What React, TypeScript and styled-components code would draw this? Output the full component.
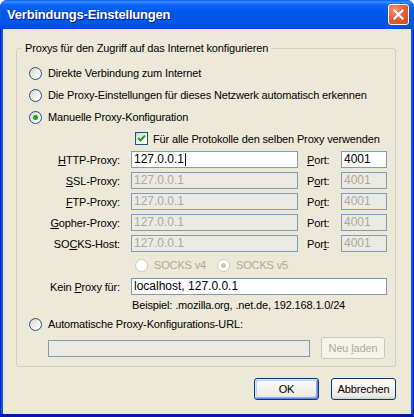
import React from "react";
import styled, { createGlobalStyle, css } from "styled-components";

const GlobalStyle = createGlobalStyle`
  html, body {
    margin: 0;
    padding: 0;
    background: #ffffff;
  }
  body {
    font-family: "Liberation Sans", Arial, sans-serif;
    font-size: 11px;
    letter-spacing: -0.15px;
    color: #000;
  }
`;

const Window = styled.div`
  width: 414px;
  height: 417px;
  display: flex;
  flex-direction: column;
  border-radius: 7px 7px 0 0;
  overflow: hidden;
  background: #0055e6;
`;

const TitleBar = styled.div`
  height: 29px;
  flex: none;
  display: flex;
  align-items: center;
  justify-content: space-between;
  padding: 0 5px 0 7px;
  box-sizing: border-box;
  background: linear-gradient(
    180deg,
    #0a5ff2 0%,
    #3d8fff 7%,
    #1068f5 14%,
    #0058ea 40%,
    #0055e5 85%,
    #0047d6 100%
  );
`;

const Title = styled.span`
  font-family: "Liberation Sans", Arial, sans-serif;
  font-weight: bold;
  font-size: 13px;
  letter-spacing: -0.2px;
  color: #fff;
  text-shadow: 1px 1px 0 #0a1a8a;
`;

const CloseButton = styled.div`
  width: 21px;
  height: 21px;
  box-sizing: border-box;
  border: 1px solid #fff;
  border-radius: 3px;
  display: flex;
  align-items: center;
  justify-content: center;
  background: radial-gradient(
    circle at 30% 25%,
    #f29272 0%,
    #e4623a 45%,
    #cf4a1f 100%
  );
`;

const Frame = styled.div`
  flex: 1;
  display: flex;
  border-left: 1px solid #0020c8;
  border-right: 1px solid #0020c8;
  border-bottom: 3px solid #0019a8;
  padding: 0 2px;
  background: #0058ee;
`;

const Client = styled.div`
  flex: 1;
  display: flex;
  flex-direction: column;
  background: #ece9d8;
  padding: 12px 15px 14px 13px;
`;

const GroupBox = styled.fieldset`
  margin: 0;
  padding: 0;
  min-width: 0;
  border: 1px solid #d0d0bf;
  border-radius: 3px;
`;

const Legend = styled.legend`
  margin-left: 5px;
  padding: 0 3px;
  line-height: 14px;
`;

const GroupContent = styled.div`
  display: flex;
  flex-direction: column;
  padding: 7px 0 7px 12px;
`;

const RadioRow = styled.div`
  height: 22px;
  display: flex;
  align-items: center;
  gap: 6px;
`;

const RadioCircle = styled.span<{ $checked?: boolean; $disabled?: boolean }>`
  width: 13px;
  height: 13px;
  box-sizing: border-box;
  border-radius: 50%;
  flex: none;
  position: relative;
  border: 1px solid ${(p) => (p.$disabled ? "#cac8bb" : "#1c5180")};
  background: ${(p) =>
    p.$disabled
      ? "#fff"
      : "linear-gradient(135deg, #d6d3c6 0%, #f4f3ee 60%, #ffffff 100%)"};
  ${(p) =>
    p.$checked &&
    css`
      &::after {
        content: "";
        position: absolute;
        left: 3px;
        top: 3px;
        width: 5px;
        height: 5px;
        border-radius: 50%;
        background: ${p.$disabled ? "#cac8bb" : "#21a121"};
      }
    `}
`;

const Muted = styled.span`
  color: #aca899;
`;

const CheckRow = styled.div`
  height: 21px;
  display: flex;
  align-items: center;
  gap: 5px;
  margin-left: 106px;
`;

const CheckBox = styled.span`
  width: 13px;
  height: 13px;
  box-sizing: border-box;
  flex: none;
  border: 1px solid #1c5180;
  background: linear-gradient(135deg, #d6d3c6 0%, #f4f3ee 60%, #ffffff 100%);
  display: flex;
  align-items: center;
  justify-content: center;
`;

const ProxyGrid = styled.div`
  display: grid;
  grid-template-columns: 102px 167px 43px 46px;
  grid-auto-rows: 17px;
  row-gap: 4px;
  align-items: center;
  margin-top: 2px;
`;

const FieldLabel = styled.span`
  text-align: right;
  padding-right: 11px;
  white-space: nowrap;
`;

const PortLabel = styled.span`
  padding-left: 9px;
`;

const Field = styled.div<{ $disabled?: boolean; $span?: boolean }>`
  height: 17px;
  box-sizing: border-box;
  border: 1px solid #7f9db9;
  background: ${(p) => (p.$disabled ? "#ebebe4" : "#fff")};
  color: ${(p) => (p.$disabled ? "#aca899" : "#000")};
  padding: 0 2px;
  font-size: 12px;
  letter-spacing: 0;
  line-height: 15px;
  white-space: nowrap;
  overflow: hidden;
  display: flex;
  align-items: center;
  ${(p) =>
    p.$span &&
    css`
      grid-column: 2 / 5;
    `}
`;

const Caret = styled.span`
  width: 1px;
  height: 13px;
  background: #000;
  margin-left: 1px;
`;

const SocksRow = styled.div`
  height: 20px;
  margin-top: 3px;
  margin-left: 106px;
  display: flex;
  align-items: center;
`;

const SocksOption = styled.div`
  width: 82px;
  display: flex;
  align-items: center;
  gap: 6px;
`;

const NoProxyGrid = styled.div`
  display: grid;
  grid-template-columns: 102px 167px 43px 46px;
  grid-template-rows: 17px 16px;
  row-gap: 2px;
  align-items: center;
  margin-top: 3px;
`;

const Hint = styled.span`
  grid-column: 2 / 5;
  padding-left: 1px;
`;

const UrlRow = styled.div`
  height: 22px;
  margin-top: 2px;
  margin-left: 19px;
  display: flex;
  align-items: center;
  gap: 11px;
`;

const UrlField = styled(Field)`
  width: 262px;
`;

const Button = styled.div<{ $default?: boolean; $disabled?: boolean }>`
  width: 65px;
  height: 22px;
  box-sizing: border-box;
  border-radius: 3px;
  display: flex;
  align-items: center;
  justify-content: center;
  border: 1px solid ${(p) => (p.$disabled ? "#c9c7ba" : "#003c74")};
  color: ${(p) => (p.$disabled ? "#aca899" : "#000")};
  background: ${(p) =>
    p.$disabled
      ? "#f5f4ea"
      : "linear-gradient(180deg, #ffffff 0%, #f4f3ee 40%, #ecebe6 85%, #d6d0c5 100%)"};
  ${(p) =>
    p.$default &&
    css`
      box-shadow: inset 1px 1px 0 #cee7ff, inset -1px -1px 0 #6982ee,
        inset 2px 2px 0 #bcd4f6, inset -2px -2px 0 #89adf4;
    `}
`;

const SmallButton = styled(Button)`
  width: 64px;
`;

const ButtonBar = styled.div`
  display: flex;
  justify-content: flex-end;
  gap: 12px;
  margin-top: 11px;
`;

const proxies = [
  { pre: "", key: "H", post: "TTP-Proxy:", portKey: 0, enabled: true },
  { pre: "", key: "S", post: "SL-Proxy:", portKey: 1, enabled: false },
  { pre: "", key: "F", post: "TP-Proxy:", portKey: 2, enabled: false },
  { pre: "", key: "G", post: "opher-Proxy:", portKey: -1, enabled: false },
  { pre: "SO", key: "C", post: "KS-Host:", portKey: 3, enabled: false },
];

const PortText: React.FC<{ index: number }> = ({ index }) => {
  const word = "Port";
  if (index < 0) return <>Port:</>;
  return (
    <>
      {word.slice(0, index)}
      <u>{word[index]}</u>
      {word.slice(index + 1)}:
    </>
  );
};

export default function App() {
  return (
    <>
      <GlobalStyle />
      <Window>
        <TitleBar>
          <Title>Verbindungs-Einstellungen</Title>
          <CloseButton>
            <svg width="11" height="11" viewBox="0 0 11 11">
              <path
                d="M1.5 1.5 L9.5 9.5 M9.5 1.5 L1.5 9.5"
                stroke="#fff"
                strokeWidth="2.2"
                strokeLinecap="square"
              />
            </svg>
          </CloseButton>
        </TitleBar>
        <Frame>
          <Client>
            <GroupBox>
              <Legend>Proxys für den Zugriff auf das Internet konfigurieren</Legend>
              <GroupContent>
                <RadioRow>
                  <RadioCircle />
                  <span>Direkte Verbindung zum Internet</span>
                </RadioRow>
                <RadioRow>
                  <RadioCircle />
                  <span>Die Proxy-Einstellungen für dieses Netzwerk automatisch erkennen</span>
                </RadioRow>
                <RadioRow>
                  <RadioCircle $checked />
                  <span>Manuelle Proxy-Konfiguration</span>
                </RadioRow>
                <CheckRow>
                  <CheckBox>
                    <svg width="9" height="9" viewBox="0 0 9 9">
                      <path
                        d="M1 4 L3.5 6.5 L8 1.5"
                        fill="none"
                        stroke="#21a121"
                        strokeWidth="2"
                      />
                    </svg>
                  </CheckBox>
                  <span>Für alle Protokolle den selben Proxy verwenden</span>
                </CheckRow>
                <ProxyGrid>
                  {proxies.map((p) => (
                    <React.Fragment key={p.post}>
                      <FieldLabel>
                        {p.pre}
                        <u>{p.key}</u>
                        {p.post}
                      </FieldLabel>
                      <Field $disabled={!p.enabled}>
                        127.0.0.1
                        {p.enabled && <Caret />}
                      </Field>
                      <PortLabel>
                        <PortText index={p.portKey} />
                      </PortLabel>
                      <Field $disabled={!p.enabled}>4001</Field>
                    </React.Fragment>
                  ))}
                </ProxyGrid>
                <SocksRow>
                  <SocksOption>
                    <RadioCircle $disabled />
                    <Muted>SOCKS v4</Muted>
                  </SocksOption>
                  <SocksOption>
                    <RadioCircle $disabled $checked />
                    <Muted>SOCKS v5</Muted>
                  </SocksOption>
                </SocksRow>
                <NoProxyGrid>
                  <FieldLabel>
                    Kein <u>P</u>roxy für:
                  </FieldLabel>
                  <Field $span>localhost, 127.0.0.1</Field>
                  <span />
                  <Hint>Beispiel: .mozilla.org, .net.de, 192.168.1.0/24</Hint>
                </NoProxyGrid>
                <RadioRow>
                  <RadioCircle />
                  <span>Automatische Proxy-Konfigurations-URL:</span>
                </RadioRow>
                <UrlRow>
                  <UrlField $disabled />
                  <SmallButton $disabled>
                    <span>
                      Neu <u>l</u>aden
                    </span>
                  </SmallButton>
                </UrlRow>
              </GroupContent>
            </GroupBox>
            <ButtonBar>
              <Button $default>OK</Button>
              <Button>Abbrechen</Button>
            </ButtonBar>
          </Client>
        </Frame>
      </Window>
    </>
  );
}
